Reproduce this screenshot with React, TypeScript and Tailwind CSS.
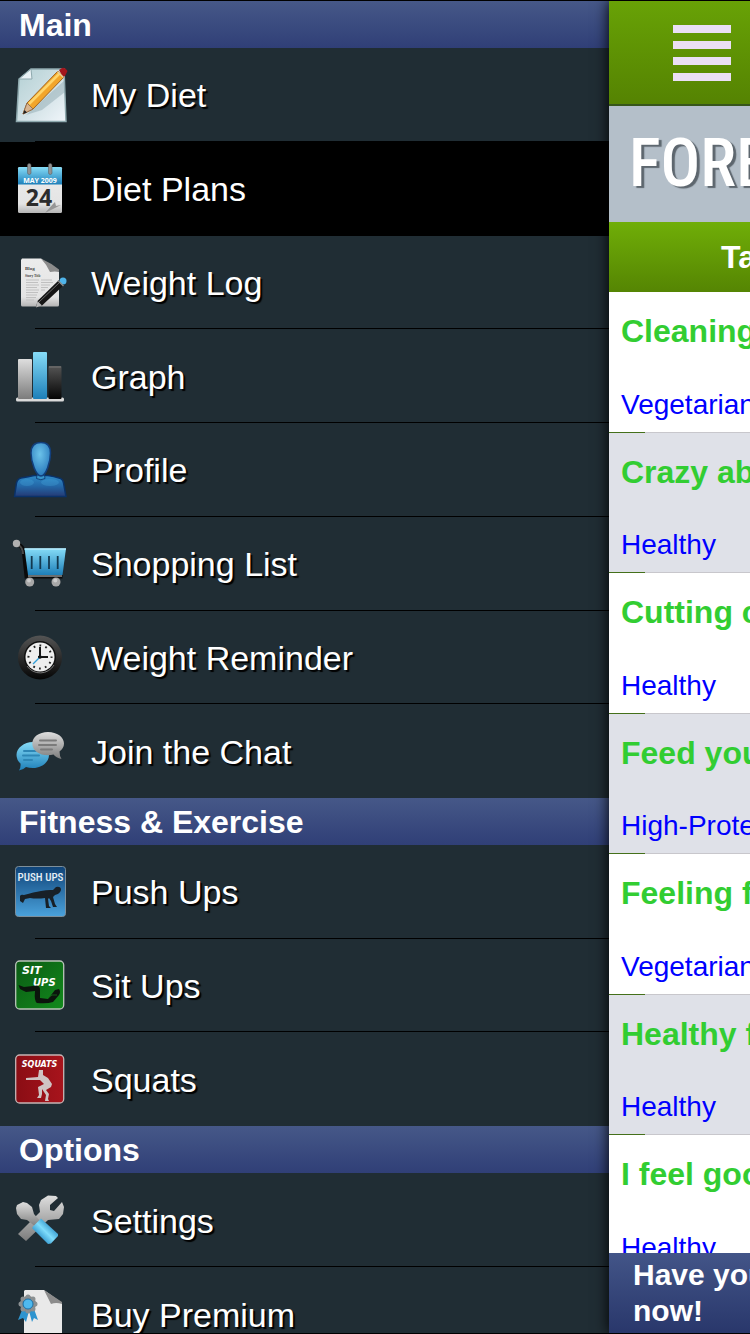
import React from 'react';
import { clsx } from 'clsx';

interface MenuItem {
  label: string;
  icon: React.ReactNode;
  active?: boolean;
}

interface MenuSection {
  title: string;
  items: MenuItem[];
  listClass: string;
}

const Icon: React.FC<{ children: React.ReactNode }> = ({ children }) => (
  <svg viewBox="0 0 56 56" className="w-14 h-14 shrink-0 overflow-visible" aria-hidden="true">
    {children}
  </svg>
);

// Gradients shared by the menu icons
const IconDefs = () => (
  <svg width="0" height="0" className="absolute" aria-hidden="true">
    <defs>
      <linearGradient id="paper" x1="0" y1="0" x2="1" y2="1">
        <stop offset="0" stopColor="#b3d0d4" />
        <stop offset="0.5" stopColor="#cfe0e4" />
        <stop offset="1" stopColor="#f0f5fa" />
      </linearGradient>
      <linearGradient id="sky" x1="0" y1="0" x2="0" y2="1">
        <stop offset="0" stopColor="#86dcf7" />
        <stop offset="1" stopColor="#1d7fb9" />
      </linearGradient>
      <linearGradient id="silver" x1="0" y1="0" x2="0" y2="1">
        <stop offset="0" stopColor="#dedede" />
        <stop offset="1" stopColor="#7c7c7c" />
      </linearGradient>
      <linearGradient id="page" x1="0" y1="0" x2="0" y2="1">
        <stop offset="0" stopColor="#ececec" />
        <stop offset="0.8" stopColor="#e4e4e4" />
        <stop offset="1" stopColor="#b4b4b4" />
      </linearGradient>
      <linearGradient id="coal" x1="0" y1="0" x2="0" y2="1">
        <stop offset="0" stopColor="#545454" />
        <stop offset="1" stopColor="#050505" />
      </linearGradient>
      <linearGradient id="handle" x1="0" y1="1" x2="1" y2="0">
        <stop offset="0.2" stopColor="#1f86c4" />
        <stop offset="0.5" stopColor="#7fdcfb" />
        <stop offset="0.8" stopColor="#2287c0" />
      </linearGradient>
      <radialGradient id="head" cx="0.45" cy="0.35" r="0.6">
        <stop offset="0" stopColor="#6cc3ea" />
        <stop offset="1" stopColor="#2f80c0" />
      </radialGradient>
      <linearGradient id="torso" x1="0" y1="0" x2="0" y2="1">
        <stop offset="0" stopColor="#2f8bc8" />
        <stop offset="0.5" stopColor="#2468a8" />
        <stop offset="1" stopColor="#243a74" />
      </linearGradient>
      <linearGradient id="pushTile" x1="0" y1="0" x2="0" y2="1">
        <stop offset="0" stopColor="#0f4378" />
        <stop offset="1" stopColor="#4aa2dc" />
      </linearGradient>
      <linearGradient id="sitTile" x1="0" y1="0" x2="1" y2="1">
        <stop offset="0" stopColor="#0b5a14" />
        <stop offset="1" stopColor="#128a1c" />
      </linearGradient>
      <linearGradient id="squatTile" x1="0" y1="0" x2="1" y2="0">
        <stop offset="0" stopColor="#8a0d14" />
        <stop offset="1" stopColor="#a8141c" />
      </linearGradient>
    </defs>
  </svg>
);

const DietIcon = () => (
  <Icon>
    <path d="M7 13 19 3H52L54 55.500H4.500Z" fill="url(#paper)" stroke="#8ea9ae" strokeWidth="1.500" />
    <path d="M7 13 19 3 20 13Z" fill="#e9f2f5" stroke="#8ea9ae" strokeWidth="1" />
    <path d="M14 49 53 14V26L30 44Z" fill="#8aa5ad" opacity="0.450" />
    <path d="M11 48 15 37 46 5 52 11 21 43Z" fill="#f2a52a" stroke="#a4641c" strokeWidth="1" />
    <path d="M17 38 48 7" stroke="#ffd56b" strokeWidth="2.500" />
    <path d="M11 48 15 37 21 43Z" fill="#d8b591" stroke="#8a6448" strokeWidth="0.800" />
    <path d="M11 48 12.500 44 15 46.500Z" fill="#222" />
    <path d="M47 4 50 2Q53 1 55.500 5L53 10 51 11Z" fill="#a3161c" />
    <path d="M45.500 5.500 51.500 11.500" stroke="#e9cf9b" strokeWidth="1.500" />
  </Icon>
);

const CalendarIcon = () => (
  <Icon>
    <rect x="6" y="7" width="44" height="46" rx="1.500" fill="url(#page)" />
    <path d="M6 24.500V8.500Q6 7 7.500 7H48.500Q50 7 50 8.500V24.500Z" fill="url(#sky)" />
    <rect x="15.500" y="3.500" width="3.500" height="11" rx="1.700" fill="#929292" stroke="#555" strokeWidth="0.500" />
    <rect x="36.500" y="3.500" width="3.500" height="11" rx="1.700" fill="#929292" stroke="#555" strokeWidth="0.500" />
    <text x="28" y="22.500" textAnchor="middle" fontSize="7" fontWeight="700" fill="#fff" fontFamily="Open Sans, sans-serif">MAY 2009</text>
    <text x="27" y="46" textAnchor="middle" fontSize="23" fontWeight="700" fill="#2c2c2c" fontFamily="Open Sans, sans-serif">24</text>
    <path d="M33 53 41 44 43 42 44 46 49 45Z" fill="#969696" />
  </Icon>
);

const LogIcon = () => (
  <Icon>
    <path d="M10 4.500H29L47 18V51Q47 52.500 45.500 52.500H10.500Q9 52.500 9 51V6Z" fill="url(#page)" />
    <path d="M29 4.500Q39 9 47 15.500V18Q43 17 38 18Q35 11 29 4.500Z" fill="#8c8c8c" />
    <text x="13" y="16" fontSize="5" fontWeight="700" fill="#444" fontFamily="Liberation Serif, serif">Blog</text>
    <text x="13" y="22.500" fontSize="3.500" fontWeight="700" fill="#444" fontFamily="Liberation Serif, serif">Story Title</text>
    <path d="M14 26H27M14 28.500H26M14 31H27M14 33.500H25M14 36H27M14 38.500H26M14 41H25M14 43.500H24M14 46H22M29 26H40M29 28.500H41M29 31H38M29 33.500H36M29 36H33" stroke="#c0c0c0" strokeWidth="1" />
    <path d="M24 53.500 25.500 47 47 26 52 31 30 51.500Z" fill="#151515" />
    <path d="M27 48 48 28" stroke="#6d6d6d" strokeWidth="1" />
    <path d="M24 53.500 25.500 47 30 51.500Z" fill="#b9b9b9" />
    <circle cx="51" cy="27" r="3.500" fill="#4fb4ea" />
    <path d="M46 26.500 51.500 32" stroke="#888" strokeWidth="1.500" />
  </Icon>
);

const GraphIcon = () => (
  <Icon>
    <rect x="4" y="49.500" width="48" height="4" rx="1.500" fill="#dadada" />
    <rect x="6" y="11" width="14" height="40" rx="1" fill="url(#silver)" />
    <rect x="21" y="4" width="14" height="47" rx="1" fill="url(#sky)" />
    <rect x="36.500" y="18" width="13" height="33" rx="1" fill="url(#coal)" />
    <path d="M37 19H49" stroke="#777" />
  </Icon>
);

const ProfileIcon = () => (
  <Icon>
    <path d="M2.500 55.500 4.500 42Q5.500 38 9 37Q17 35.500 22 34.500H36Q42 35.500 47 37Q51 38 51.500 42L54 55.500Z" fill="url(#torso)" stroke="#0a3269" strokeWidth="1.500" />
    <ellipse cx="15" cy="41.500" rx="7" ry="3.500" fill="#4aa8dd" opacity="0.300" />
    <ellipse cx="38" cy="41.500" rx="9" ry="3.500" fill="#4aa8dd" opacity="0.300" />
    <path d="M25 34 24.500 37.500Q29 40 33 37.500L32.500 34Z" fill="#3793c9" stroke="#0a3269" strokeWidth="0.800" />
    <path d="M29 1.500C35 1.500 38.500 5 38.500 12C38.500 21 34 35 29 35C24 35 19 21 19 12C19 5 23 1.500 29 1.500Z" fill="url(#head)" stroke="#123f7c" strokeWidth="1.500" />
  </Icon>
);

const CartIcon = () => (
  <Icon>
    <path d="M5 9Q11 11 12 18L14.500 41.500H50.500" fill="none" stroke="#0a0a0a" strokeWidth="4" />
    <path d="M6 9.500Q10.500 12 11 19" fill="none" stroke="#4a4a4a" strokeWidth="2" />
    <path d="M12.500 13.500H54L50.500 40H16Z" fill="url(#sky)" />
    <path d="M12.500 14H54" stroke="#b4eafb" strokeWidth="1.500" />
    <path d="M19.700 21V34M28.300 21V34M37 21V34M45.700 21V34" stroke="#12384f" strokeWidth="1.800" />
    <path d="M16 41H50" stroke="#c9d2d5" strokeWidth="1" />
    <circle cx="4.500" cy="8.500" r="3.700" fill="#b0b0b0" />
    <circle cx="17.700" cy="47" r="4.500" fill="#a8a8a8" />
    <circle cx="44" cy="47" r="4.500" fill="#a8a8a8" />
    <circle cx="17" cy="45.500" r="2" fill="#ccc" />
    <circle cx="43.300" cy="45.500" r="2" fill="#ccc" />
  </Icon>
);

const ClockIcon = () => (
  <Icon>
    <circle cx="28" cy="28.500" r="22" fill="url(#coal)" />
    <circle cx="28" cy="28" r="16" fill="#101010" />
    <path d="M15 37A16 16 0 0 0 42 36" fill="none" stroke="#777" strokeWidth="1" />
    <circle cx="28" cy="28" r="14.500" fill="#eee" />
    <circle cx="28" cy="28" r="11.500" fill="none" stroke="#222" strokeWidth="2" strokeDasharray="1.800 4.221" strokeDashoffset="0.900" />
    <path d="M28 29V18M26 28H36" stroke="#151515" strokeWidth="2" />
    <path d="M29 27 21 35" stroke="#2f9ed8" strokeWidth="1.200" />
    <circle cx="28" cy="28" r="1.800" fill="#111" />
  </Icon>
);

const ChatIcon = () => (
  <Icon>
    <path d="M21 19C30 19 37 25 37 32C37 39 30 45 21 45Q17 45 14 44Q11 47 7 47.500Q9 44 8.500 40.500Q4.500 37 4.500 32C4.500 25 12 19 21 19Z" fill="url(#sky)" />
    <path d="M12 28H24M11 32.500H27M12 37H20" stroke="#2d86b5" strokeWidth="2" strokeLinecap="round" />
    <path d="M36 9C45 9 52 14 52 20.500Q52 25 47.500 28.500Q47.500 33 49.500 36Q44 34.500 41.500 31.500Q39 32.300 36 32.300C27 32.300 20.300 27 20.300 20.700C20.300 14 27 9 36 9Z" fill="url(#silver)" />
    <path d="M28 17.500H44M27 22H44M29 26.500H40" stroke="#7b7b7b" strokeWidth="2" strokeLinecap="round" />
  </Icon>
);

const PushUpsIcon = () => (
  <Icon>
    <rect x="3.500" y="3.500" width="50" height="50" rx="3" fill="url(#pushTile)" stroke="#7d8f9b" />
    <text x="28.500" y="18" textAnchor="middle" fontSize="11" fontWeight="500" fill="#e6eef5" fontFamily="Roboto Condensed, Roboto, sans-serif">PUSH UPS</text>
    <path d="M8 33Q9 31 12 32Q22 29 29 28Q36 26.500 41 27L44 24Q49 23 49 27Q48 31 43 32L41 34 43 41 45 44H41L39 38 37 35 36 36 37 43 39 45H34L33 35Q25 36 18 35L13 36 11 40 8 38Z" fill="#182027" />
  </Icon>
);

const SitUpsIcon = () => (
  <Icon>
    <rect x="3.700" y="4" width="48" height="48" rx="4" fill="url(#sitTile)" stroke="#b9c4b9" strokeWidth="1.300" />
    <text x="10" y="17" fontSize="11" fontWeight="700" fontStyle="italic" fill="#fff" fontFamily="DejaVu Sans, sans-serif">SIT</text>
    <text x="21" y="28.500" fontSize="10" fontWeight="700" fontStyle="italic" fill="#fff" fontFamily="DejaVu Sans, sans-serif">UPS</text>
    <path d="M6.500 28 12 30 25 28.500Q28 29 28 33L28 41 36 42 43 33 47 32Q49 35 47 38L41 45Q35 47 25 46Q22 44 23 34L14 35 8 32Z" fill="#0b150c" />
    <path d="M36 41 40 38 45 38" fill="none" stroke="#15701b" strokeWidth="0.800" />
  </Icon>
);

const SquatsIcon = () => (
  <Icon>
    <rect x="3.700" y="4" width="48" height="48" rx="4" fill="url(#squatTile)" stroke="#c6b4b4" strokeWidth="1.300" />
    <text x="27.500" y="16" textAnchor="middle" fontSize="8" fontWeight="700" fontStyle="italic" fill="#fff" fontFamily="DejaVu Sans, sans-serif">SQUATS</text>
    <path d="M27 19H31V24L36 27 40 33 39 36 34 39 37 43 36 48 37 50H33L34 44 30 38 30 43 29 47H25L27 44 26 36 32 33 28 29 14 29V27L26 26Z" fill="#cfc3c3" />
  </Icon>
);

const SettingsIcon = () => (
  <Icon>
    <path d="M6 42 28 20 27 13 29 8 36 3.500 44 4 46 6 38 13V18L42 19 50 10 52 15 51 22 47 27 36 28 14 49Z" fill="url(#silver)" />
    <path d="M4 16 5 13 11 10 15 11 20 15 22 22 29 30 24 35 15 28 9 27 5 22Z" fill="url(#silver)" />
    <path d="M29 26.500 46 42V44L39 51.500 36 52 20.500 36.500V35Z" fill="url(#handle)" />
  </Icon>
);

const PremiumIcon = () => (
  <Icon>
    <path d="M13 4H32L50 17V56H12V5Z" fill="#e9e9e9" />
    <path d="M32 4 50 16V18Q44 16 39 18Z" fill="#8c8c8c" />
    <path d="M10 24 6 34 11 32 14 36 17 25ZM17 25 20 36 22 32 26 34 22 23Z" fill="#2d94cf" />
    <circle cx="16" cy="18" r="6.500" fill="none" stroke="#7f8486" strokeWidth="3" />
    <path d="M16 11V11M21 13V13M23 18V18M21 23V23M16 25V25M11 23V23M9 18V18M11 13V13" stroke="#8b9092" strokeWidth="5" strokeLinecap="round" />
    <circle cx="16" cy="18" r="5" fill="#4fb9ee" stroke="#186fa8" />
  </Icon>
);

const sections: MenuSection[] = [
  {
    title: 'Main',
    listClass: 'h-[750px]',
    items: [
      { label: 'My Diet', icon: <DietIcon /> },
      { label: 'Diet Plans', icon: <CalendarIcon />, active: true },
      { label: 'Weight Log', icon: <LogIcon /> },
      { label: 'Graph', icon: <GraphIcon /> },
      { label: 'Profile', icon: <ProfileIcon /> },
      { label: 'Shopping List', icon: <CartIcon /> },
      { label: 'Weight Reminder', icon: <ClockIcon /> },
      { label: 'Join the Chat', icon: <ChatIcon /> },
    ],
  },
  {
    title: 'Fitness & Exercise',
    listClass: 'h-[281px]',
    items: [
      { label: 'Push Ups', icon: <PushUpsIcon /> },
      { label: 'Sit Ups', icon: <SitUpsIcon /> },
      { label: 'Squats', icon: <SquatsIcon /> },
    ],
  },
  {
    title: 'Options',
    listClass: 'h-[188px]',
    items: [
      { label: 'Settings', icon: <SettingsIcon /> },
      { label: 'Buy Premium', icon: <PremiumIcon /> },
    ],
  },
];

const plans = [
  { title: 'Cleaning', tag: 'Vegetarian' },
  { title: 'Crazy about', tag: 'Healthy' },
  { title: 'Cutting carbs', tag: 'Healthy' },
  { title: 'Feed your', tag: 'High-Protein' },
  { title: 'Feeling full', tag: 'Vegetarian' },
  { title: 'Healthy for', tag: 'Healthy' },
  { title: 'I feel good', tag: 'Healthy' },
];

const Section: React.FC<{ section: MenuSection }> = ({ section }) => (
  <section className="shrink-0">
    <h2 className="flex h-[47px] items-center bg-linear-to-b from-[#465888] to-[#303f77] pl-[19px] text-[32px] font-bold leading-none text-white">
      {section.title}
    </h2>
    <ul className={clsx('grid auto-rows-fr', section.listClass)}>
      {section.items.map((item, i) => (
        <li key={item.label} className={clsx('flex flex-col', item.active && 'bg-black')}>
          <a href="#" className="flex flex-1 items-center gap-[23px] pl-3">
            {item.icon}
            <span className="pt-0.5 text-[34px] leading-10 whitespace-nowrap text-white [text-shadow:2px_2px_1px_#000]">
              {item.label}
            </span>
          </a>
          {i < section.items.length - 1 && <div className="ml-[35px] h-px bg-black" />}
        </li>
      ))}
    </ul>
  </section>
);

export default function App() {
  return (
    <div className="flex h-screen overflow-hidden border-y border-black bg-[#202d34] font-['Liberation_Sans',Arial,sans-serif]">
      <IconDefs />
      <nav className="flex min-w-0 flex-1 flex-col overflow-hidden">
        {sections.map((section) => (
          <Section key={section.title} section={section} />
        ))}
      </nav>

      <main className="z-10 flex w-[141px] shrink-0 flex-col overflow-hidden bg-white whitespace-nowrap shadow-[0_0_14px_#000]">
        <header className="flex h-[105px] shrink-0 items-center border-b-2 border-[#37561a] bg-linear-to-b from-[#68a206] to-[#558302] pl-16">
          <button type="button" aria-label="Menu" className="flex flex-col gap-2">
            <span className="h-2 w-[58px] bg-[#eadff5]" />
            <span className="h-2 w-[58px] bg-[#eadff5]" />
            <span className="h-2 w-[58px] bg-[#eadff5]" />
            <span className="h-2 w-[58px] bg-[#eadff5]" />
          </button>
        </header>
        <div className="flex h-[116px] shrink-0 items-center bg-[#b4bfc9] pl-5 font-['Roboto_Condensed',Roboto,sans-serif] text-[66px] font-medium leading-none text-white [text-shadow:3px_2px_1px_#5d666e]">
          FOREVER
        </div>
        <div className="flex h-[70px] shrink-0 items-center bg-linear-to-b from-[#70ae08] to-[#558503] pl-28 text-[32px] font-bold leading-none text-white">
          Tap
        </div>

        <div className="min-h-0 flex-1 overflow-hidden">
          <ul className="grid h-[984px] auto-rows-fr">
            {plans.map((plan) => (
              <li key={plan.title} className="flex flex-col bg-white even:bg-[#dfe1e8]">
                <a href="#" className="flex flex-1 flex-col justify-between pt-[19px] pb-[7px] pl-3">
                  <span className="text-[32px] font-bold leading-10 text-[#32cd32]">{plan.title}</span>
                  <span className="text-[28px] leading-10 text-[#0000ff]">{plan.tag}</span>
                </a>
                <div className="flex h-px">
                  <div className="w-9 bg-[#44701a]" />
                  <div className="flex-1 bg-[#c8c7cc]" />
                </div>
              </li>
            ))}
          </ul>
        </div>

        <footer className="h-20 shrink-0 bg-linear-to-b from-[#435588] to-[#29376b] pt-1 pl-6 text-[30px] font-bold leading-9 text-white">
          Have you
          <br />
          now!
        </footer>
      </main>
    </div>
  );
}
